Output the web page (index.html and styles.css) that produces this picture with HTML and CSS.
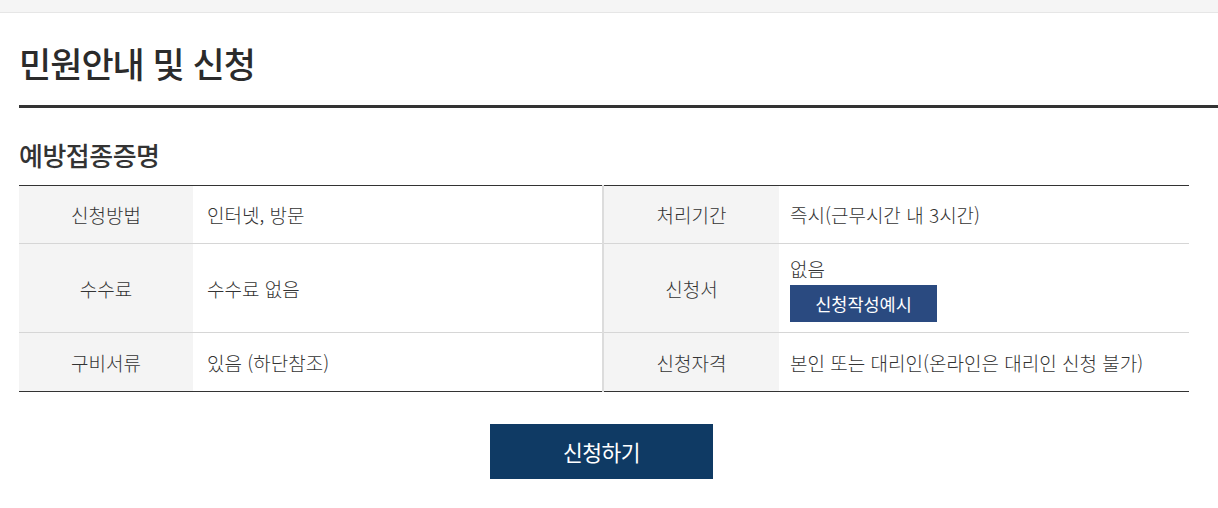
FILE: index.html
```html
<!DOCTYPE html>
<html lang="ko">
<head>
<meta charset="utf-8">
<title>민원안내 및 신청</title>
<link rel="stylesheet" href="styles.css">
</head>
<body>
<div class="topbar"></div>
<main class="content">
  <h1 class="page-title">민원안내 및 신청</h1>
  <h2 class="sub-title">예방접종증명</h2>
  <table class="info-table">
    <tbody>
      <tr class="row-1">
        <th>신청방법</th>
        <td>인터넷, 방문</td>
        <th class="th-right">처리기간</th>
        <td class="td-right">즉시(근무시간 내 3시간)</td>
      </tr>
      <tr class="row-2">
        <th>수수료</th>
        <td>수수료 없음</td>
        <th class="th-right">신청서</th>
        <td class="td-right">
          <div class="form-none">없음</div>
          <a class="btn-example" href="#">신청작성예시</a>
        </td>
      </tr>
      <tr class="row-3">
        <th>구비서류</th>
        <td>있음 (하단참조)</td>
        <th class="th-right">신청자격</th>
        <td class="td-right">본인 또는 대리인(온라인은 대리인 신청 불가)</td>
      </tr>
    </tbody>
  </table>
  <div class="actions">
    <a class="btn-apply" href="#">신청하기</a>
  </div>
</main>
</body>
</html>
```

FILE: styles.css
```css
* { box-sizing: border-box; }
html, body {
  margin: 0;
  padding: 0;
  background: #fff;
  font-family: "Noto Sans CJK KR", "Noto Sans", sans-serif;
  color: #333;
}
.topbar {
  height: 13px;
  background: #f5f5f5;
  border-bottom: 1px solid #e6e6e6;
}
.content {
  padding-left: 19px;
}
.page-title {
  margin: 0;
  padding-top: 26px;
  padding-bottom: 18px;
  font-size: 35px;
  line-height: 48px;
  font-weight: 500;
  letter-spacing: -1px;
  color: #2b2b2b;
  border-bottom: 3px solid #333;
}
.sub-title {
  margin: 0;
  padding-top: 29px;
  padding-bottom: 12px;
  font-size: 26px;
  line-height: 36px;
  font-weight: 500;
  letter-spacing: -0.5px;
  color: #333;
}
.info-table {
  width: 1170px;
  border-collapse: collapse;
  table-layout: fixed;
  border-top: 1px solid #333;
  border-bottom: 1px solid #333;
  font-size: 19px;
  font-weight: 300;
  letter-spacing: 0;
}
.info-table th {
  width: 174px;
  background: #f4f4f4;
  font-weight: 300;
  text-align: center;
  color: #333;
}
.info-table td {
  width: 410px;
  text-align: left;
  padding-left: 14px;
  color: #333;
}
.info-table .th-right {
  width: 176px;
  border-left: 2px solid #dcdcdc;
}
.info-table .td-right {
  padding-left: 11px;
}
.info-table tr + tr th,
.info-table tr + tr td {
  border-top: 1px solid #d6d6d6;
}
.info-table tr + tr .th-right {
  border-left: 2px solid #dcdcdc;
}
.row-1 th, .row-1 td { height: 58px; }
.row-2 th, .row-2 td { height: 89px; }
.row-3 th, .row-3 td { height: 59px; }
.form-none {
  line-height: 24px;
  margin-top: 2px;
}
.btn-example {
  display: inline-block;
  margin-top: 4px;
  width: 147px;
  height: 37px;
  line-height: 37px;
  text-align: center;
  background: #2a4a80;
  color: #fff;
  text-decoration: none;
  font-size: 17.5px;
  font-weight: 400;
}
.actions {
  width: 1170px;
  display: flex;
  justify-content: center;
  padding-top: 32px;
}
.btn-apply {
  display: block;
  width: 223px;
  height: 55px;
  line-height: 55px;
  margin-right: 5px;
  text-align: center;
  background: #0f3a64;
  color: #fff;
  text-decoration: none;
  font-size: 21.5px;
  letter-spacing: -0.5px;
}
```
